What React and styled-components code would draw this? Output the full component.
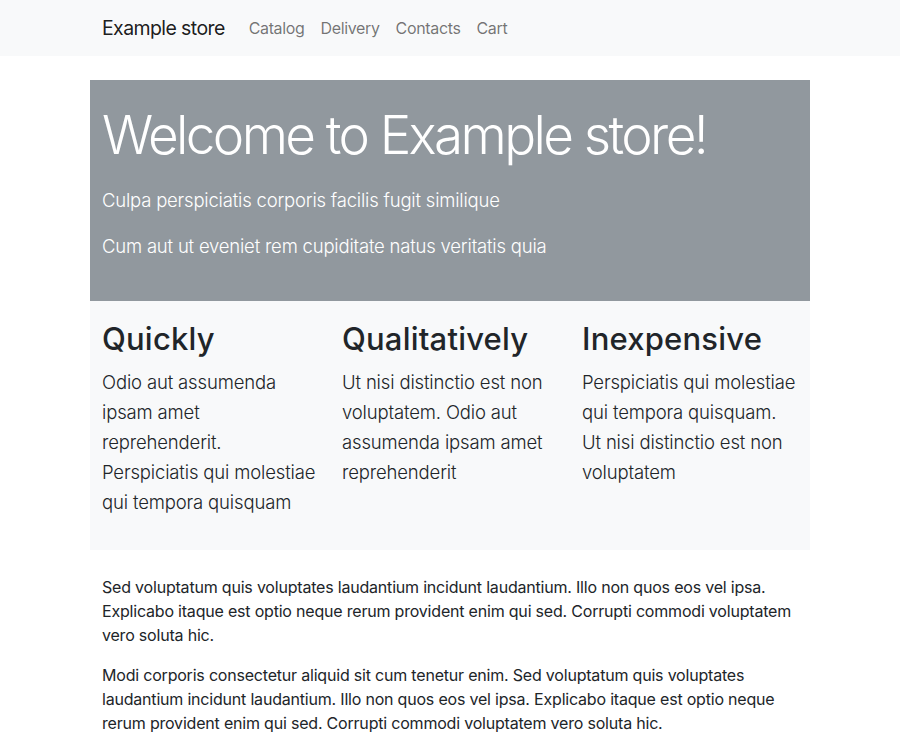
import React from "react";
import styled, { createGlobalStyle } from "styled-components";

const Global = createGlobalStyle`
  * { box-sizing: border-box; }
  body {
    margin: 0;
    font-family: Inter, "Noto Sans", "Liberation Sans", sans-serif;
    font-size: 16px;
    line-height: 1.5;
    color: #212529;
    background: #fff;
  }
`;

const Nav = styled.nav`
  background: #f8f9fa;
  height: 56px;
  display: flex;
  align-items: center;
`;

const Container = styled.div`
  width: 720px;
  margin: 0 auto;
  padding: 0 12px;
`;

const NavInner = styled(Container)`
  display: flex;
  align-items: center;
`;

const Brand = styled.a`
  font-size: 19.5px;
  line-height: 30px;
  letter-spacing: -0.6px;
  color: rgba(0, 0, 0, 0.9);
  margin-right: 16px;
  text-decoration: none;
`;

const NavList = styled.ul`
  display: flex;
  list-style: none;
  margin: 0;
  padding: 0;
`;

const NavLink = styled.a`
  display: block;
  padding: 8px;
  font-size: 16px;
  letter-spacing: -0.35px;
  color: rgba(0, 0, 0, 0.55);
  text-decoration: none;
`;

const Hero = styled.header`
  width: 720px;
  margin: 24px auto 0;
  padding: 24px 12px;
  background: #91989e;
  color: #fff;
`;

const HeroTitle = styled.h1`
  margin: 0 0 17px;
  font-size: 53px;
  font-weight: 300;
  line-height: 1.2;
  letter-spacing: -2.6px;
`;

const Lead = styled.p`
  margin: 0 0 16px;
  font-size: 18.5px;
  font-weight: 350;
  line-height: 30px;
  letter-spacing: -0.2px;
`;

const Features = styled.section`
  width: 720px;
  margin: 0 auto;
  padding: 19px 0 17px;
  background: #f8f9fa;
  display: grid;
  grid-template-columns: repeat(3, 1fr);
`;

const Feature = styled.div`
  padding: 0 12px;
`;

const FeatureTitle = styled.h2`
  margin: 0 0 10px;
  font-size: 31px;
  font-weight: 500;
  line-height: 1.2;
  letter-spacing: 0.2px;
  color: #212529;
`;

const FeatureText = styled.p`
  margin: 0 0 16px;
  font-size: 18.5px;
  line-height: 30px;
  font-weight: 350;
  letter-spacing: -0.15px;
`;

const Body = styled(Container)`
  padding-top: 25px;
`;

const Text = styled.p`
  margin: 0 0 16px;
  font-size: 16px;
  line-height: 24px;
  letter-spacing: -0.2px;
`;

const features = [
  {
    title: "Quickly",
    text: "Odio aut assumenda ipsam amet reprehenderit. Perspiciatis qui molestiae qui tempora quisquam",
  },
  {
    title: "Qualitatively",
    text: "Ut nisi distinctio est non voluptatem. Odio aut assumenda ipsam amet reprehenderit",
  },
  {
    title: "Inexpensive",
    text: "Perspiciatis qui molestiae qui tempora quisquam. Ut nisi distinctio est non voluptatem",
  },
];

export default function App() {
  return (
    <>
      <Global />
      <Nav>
        <NavInner>
          <Brand href="#">Example store</Brand>
          <NavList>
            {["Catalog", "Delivery", "Contacts", "Cart"].map((l) => (
              <li key={l}>
                <NavLink href="#">{l}</NavLink>
              </li>
            ))}
          </NavList>
        </NavInner>
      </Nav>
      <Hero>
        <HeroTitle>Welcome to Example store!</HeroTitle>
        <Lead>Culpa perspiciatis corporis facilis fugit similique</Lead>
        <Lead>Cum aut ut eveniet rem cupiditate natus veritatis quia</Lead>
      </Hero>
      <Features>
        {features.map((f) => (
          <Feature key={f.title}>
            <FeatureTitle>{f.title}</FeatureTitle>
            <FeatureText>{f.text}</FeatureText>
          </Feature>
        ))}
      </Features>
      <Body>
        <Text>
          Sed voluptatum quis voluptates laudantium incidunt laudantium. Illo non quos eos vel ipsa.
          Explicabo itaque est optio neque rerum provident enim qui sed. Corrupti commodi voluptatem
          vero soluta hic.
        </Text>
        <Text>
          Modi corporis consectetur aliquid sit cum tenetur enim. Sed voluptatum quis voluptates
          laudantium incidunt laudantium. Illo non quos eos vel ipsa. Explicabo itaque est optio neque
          rerum provident enim qui sed. Corrupti commodi voluptatem vero soluta hic.
        </Text>
      </Body>
    </>
  );
}
